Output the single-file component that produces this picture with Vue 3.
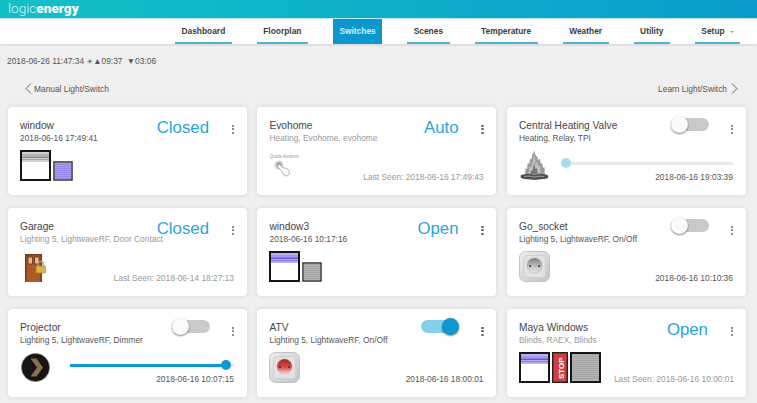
<script setup>
const nav = [
  { label: 'Dashboard' }, { label: 'Floorplan' }, { label: 'Switches', active: true },
  { label: 'Scenes' }, { label: 'Temperature' }, { label: 'Weather' }, { label: 'Utility' },
  { label: 'Setup', caret: true },
]
const b = (w, color, closed) => ({ t: 'blind', w, color, closed })
const cards = [
  { name: 'window', sub: '2018-06-16 17:49:41', on: true, state: 'Closed', icons: [b(31, 'gray', false), b(20, 'purple', true)] },
  { name: 'Evohome', sub: 'Heating, Evohome, evohome', state: 'Auto', icons: [{ t: 'hand' }], foot: 'Last Seen: 2018-06-16 17:49:43', dim: true },
  { name: 'Central Heating Valve', sub: 'Heating, Relay, TPI', on: true, toggle: 'off', icons: [{ t: 'fire' }], slider: 0, foot: '2018-06-16 19:03:39' },
  { name: 'Garage', sub: 'Lighting 5, LightwaveRF, Door Contact', state: 'Closed', icons: [{ t: 'door' }], foot: 'Last Seen: 2018-06-14 18:27:13', dim: true },
  { name: 'window3', sub: '2018-06-16 10:17:16', on: true, state: 'Open', icons: [b(31, 'purple', false), b(20, 'gray', true)] },
  { name: 'Go_socket', sub: 'Lighting 5, LightwaveRF, On/Off', on: true, toggle: 'off', icons: [{ t: 'socket' }], foot: '2018-06-16 10:10:36' },
  { name: 'Projector', sub: 'Lighting 5, LightwaveRF, Dimmer', on: true, toggle: 'off', icons: [{ t: 'plex' }], slider: 95, foot: '2018-06-16 10:07:15' },
  { name: 'ATV', sub: 'Lighting 5, LightwaveRF, On/Off', on: true, toggle: 'on', icons: [{ t: 'socket', red: true }], foot: '2018-06-16 18:00:01' },
  { name: 'Maya Windows', sub: 'Blinds, RAEX, Blinds', state: 'Open', icons: [b(31, 'purple', false), { t: 'stop' }, b(31, 'gray', true)], foot: 'Last Seen: 2018-06-16 10:00:01', dim: true },
]
const slats = [2, 4, 6, 8, 10, 12, 14, 16, 18, 20, 22, 24, 26, 28]
</script>

<template>
  <div class="page">
    <header class="brand"><span class="logo"><span class="thin">logic</span><b>energy</b></span></header>
    <nav class="nav">
      <a v-for="n in nav" :key="n.label" class="tab" :class="{ active: n.active }">
        {{ n.label }}<i v-if="n.caret" class="caret"></i>
      </a>
    </nav>
    <div class="clock">2018-06-26 11:47:34 <span class="sun">☀</span>▲09:37 <span class="down">▼03:06</span></div>
    <div class="crumbs">
      <a class="crumb">
        <svg width="7" height="11" viewBox="0 0 7 11"><path d="M6 .5 1 5.500l5 5" fill="none" stroke="#555" stroke-width=".9" /></svg>
        Manual Light/Switch
      </a>
      <a class="crumb next">
        Learn Light/Switch
        <svg width="7" height="11" viewBox="0 0 7 11"><path d="M1 .5l5 5-5 5" fill="none" stroke="#555" stroke-width=".9" /></svg>
      </a>
    </div>
    <main class="grid">
      <section v-for="c in cards" :key="c.name" class="card">
        <div class="head">
          <div class="info">
            <div class="name">{{ c.name }}</div>
            <div class="sub" :class="{ dim: !c.on }">{{ c.sub }}</div>
          </div>
          <div v-if="c.state" class="state">{{ c.state }}</div>
          <div v-if="c.toggle" class="toggle" :class="{ on: c.toggle === 'on' }"><i></i></div>
          <div class="menu"><i></i><i></i><i></i></div>
        </div>
        <div class="body">
          <div class="icons">
            <template v-for="(ic, i) in c.icons" :key="i">
              <svg v-if="ic.t === 'blind'" :width="ic.w" :height="ic.w" :viewBox="`0 0 ${ic.w} ${ic.w}`" class="blind">
                <rect x="1" y="1" :width="ic.w - 2" :height="ic.w - 2" fill="#fff" :stroke="ic.w > 25 ? '#151515' : '#333'" :stroke-width="ic.w > 25 ? 2 : 1.500" />
                <template v-if="ic.closed">
                  <rect x="2" y="2" :width="ic.w - 4" :height="ic.w - 4" :fill="ic.color === 'gray' ? '#bcbcbc' : '#8f7ce8'" />
                  <rect v-for="s in slats.filter(v => v < ic.w - 3)" :key="s" x="2" :y="s + .5" :width="ic.w - 4" height=".7" :fill="ic.color === 'gray' ? '#909090' : '#c4b8f5'" />
                </template>
                <template v-else>
                  <rect x="2" y="2" :width="ic.w - 4" height="10" :fill="ic.color === 'gray' ? '#cfcfcf' : '#b9adf0'" />
                  <rect x="2" y="4.500" :width="ic.w - 4" height="1" :fill="ic.color === 'gray' ? '#9a9a9a' : '#9583e6'" />
                  <rect x="2" y="6.500" :width="ic.w - 4" height="1.500" :fill="ic.color === 'gray' ? '#8a8a8a' : '#6c54d8'" />
                  <rect x="2" y="9" :width="ic.w - 4" height="1" :fill="ic.color === 'gray' ? '#a8a8a8' : '#8a76e2'" />
                </template>
              </svg>
              <svg v-else-if="ic.t === 'stop'" width="16" height="31" viewBox="0 0 16 31" class="stop">
                <rect x=".7" y=".7" width="14.600" height="29.600" fill="#d23d3d" stroke="#222" stroke-width="1.400" />
                <text transform="translate(11.500 27) rotate(-90)" class="stoptext">STOP</text>
              </svg>
              <div v-else-if="ic.t === 'hand'" class="quick">
                <span>Quick Actions</span>
                <svg width="20" height="20" viewBox="0 0 20 20" class="soft">
                  <circle cx="5" cy="5" r="4.600" fill="#d2d2d2" />
                  <circle cx="5" cy="5" r="2.400" fill="#9a9a9a" />
                  <path d="M3.800 5.400c.5-1 1.600-1.200 2.300-.4l3 3c1.700-.4 4 .4 5.400 2.200 1.400 1.800 1.200 3.900-.2 5-1.300 1.100-3.200.9-4.500-.5L7.800 11.400 3.900 6.900c-.2-.4-.3-1-.1-1.500Z" fill="#fff" stroke="#9b9b9b" stroke-width=".8" />
                </svg>
              </div>
              <svg v-else-if="ic.t === 'fire'" width="31" height="31" viewBox="0 0 31 31" class="soft">
                <path d="M15 0l1.500 5 2 2.500.5 3 2-2 .5 4.500 2 1 .5 4 1.500-1 .3 8H6l.6-7 1.500 1 .4-5 2-1 .5-4.500 1.500 1 .6-4.500 1.500-2.500Z" fill="#9a9a9a" />
                <path d="M15 3l1 6 .5 6 1.500-4 1 6 2-2 .5 8H9.500l1-7 1.500 2 1-6 1 1Z" fill="#c2c2c2" />
                <path d="M15 13l1.500 6 1.500-1 .5 6h-7l.6-4 1.400 1Z" fill="#757575" />
                <path d="M2.500 25c4-1.500 8-1 13 0 5-1 9-1.500 13 0 1.300 1.200 1 3-.5 3.600-3.500 1-7 .5-12.500 1.300-5.500-.8-9.500-.3-12.500-1.300-1.700-.8-1.700-2.500-1-3.600Z" fill="#505050" />
                <path d="M5 26.500c3.500-.7 7-.3 10 .6 3.500-.9 7-1.100 10-.4" fill="none" stroke="#a8a8a8" stroke-width=".9" />
              </svg>
              <svg v-else-if="ic.t === 'door'" width="31" height="31" viewBox="0 0 31 31" class="soft">
                <path d="M5 3h17v28H5Z" fill="#7a3b14" />
                <path d="M6.500 4.500h14V31h-14Z" fill="#ad5a26" />
                <rect x="8" y="6" width="4.500" height="7" fill="#e6b98c" stroke="#5c2c10" stroke-width=".8" />
                <rect x="14.500" y="6" width="4.500" height="7" fill="#e6b98c" stroke="#5c2c10" stroke-width=".8" />
                <path d="M18 15v-2a2.700 2.700 0 0 1 5.400 0v2" fill="none" stroke="#a8a898" stroke-width="1.300" />
                <rect x="16" y="15" width="9.500" height="7" rx="1" fill="#dcb04c" stroke="#a57e28" stroke-width=".6" />
              </svg>
              <svg v-else-if="ic.t === 'socket'" width="31" height="31" viewBox="0 0 31 31" class="soft">
                <defs>
                  <linearGradient :id="`plate${ic.red ? 'r' : 'g'}`" x1="0" y1="0" x2="1" y2="1"><stop offset="0" stop-color="#eee" /><stop offset="1" stop-color="#c4c4c4" /></linearGradient>
                  <linearGradient id="redface" x1="0" y1="0" x2="0" y2="1"><stop offset="0" stop-color="#a92424" /><stop offset=".55" stop-color="#d64a4a" /><stop offset="1" stop-color="#f6dede" /></linearGradient>
                  <linearGradient id="grayface" x1="0" y1="0" x2="0" y2="1"><stop offset="0" stop-color="#7d7d7d" /><stop offset=".6" stop-color="#c4c4c4" /><stop offset="1" stop-color="#e6e6e6" /></linearGradient>
                </defs>
                <rect x=".5" y=".5" width="30" height="30" rx="6" :fill="`url(#plate${ic.red ? 'r' : 'g'})`" stroke="#c2c2c2" />
                <rect x="4.500" y="4.500" width="22" height="22" rx="3" fill="#e2e2e2" stroke="#cfcfcf" />
                <circle cx="15.500" cy="14.500" r="7.500" :fill="ic.red ? 'url(#redface)' : 'url(#grayface)'" stroke="#999" stroke-width=".4" />
                <circle cx="11" cy="15" r="1" fill="#333" />
                <circle cx="20" cy="15" r="1" fill="#333" />
              </svg>
              <svg v-else-if="ic.t === 'plex'" width="31" height="31" viewBox="0 0 31 31" class="soft">
                <circle cx="15.500" cy="15.500" r="14" fill="#161513" stroke="#8a7b60" stroke-width=".6" />
                <path d="M10.500 6.500h6l6.500 9-6.500 9h-6l6.500-9Z" fill="#85734f" />
              </svg>
            </template>
          </div>
          <div class="side" :class="{ dim: c.dim }">
            <div v-if="c.slider !== undefined" class="slider" :class="{ low: c.slider === 0 }">
              <div class="fill" :style="{ width: c.slider + '%' }"></div>
              <i :style="{ left: c.slider + '%' }"></i>
            </div>
            <div v-if="c.foot" class="foot">{{ c.foot }}</div>
          </div>
        </div>
      </section>
    </main>
  </div>
</template>

<style>
html, body { margin: 0; background: #efefef; }
</style>

<style scoped>
.page {
  width: 757px; height: 403px; overflow: hidden; background: #efefef;
  font-family: "Liberation Sans", Arial, sans-serif; font-size: 8.4px; color: #555;
}
.brand {
  height: 18px; box-sizing: border-box; padding-left: 8px; line-height: 17px;
  background: linear-gradient(90deg, #13c0c6 0%, #0eb0c9 50%, #0a9ccb 100%);
}
.logo { font-family: Roboto, sans-serif; font-size: 13.6px; color: #d8f6f7; }
.thin { font-weight: 300; }
.logo b { font-weight: 900; color: #f4fdfd; }
.nav {
  display: flex; gap: 25px; height: 25.5px; box-sizing: border-box; padding-left: 175px;
  background: #fff; border-top: 1px solid #bfeaf0; box-shadow: 0 1px 2px rgba(0,0,0,.12);
}
.tab {
  padding: 0 6.5px; line-height: 24px; height: 24.5px; box-sizing: border-box;
  font-weight: 700; color: #3b3b3b; border-bottom: 2px solid #4fb2d9; white-space: nowrap;
}
.tab.active { background: #0b98cf; color: #d3eef8; border-bottom-color: #0b98cf; }
.caret {
  display: inline-block; margin-left: 5px; vertical-align: 1px;
  border: 2px solid transparent; border-top-color: #999; border-bottom: 0;
}
.clock { padding: 11px 0 0 7px; line-height: 12px; white-space: nowrap; }
.sun { font-size: 7.5px; font-family: "DejaVu Sans", sans-serif; }
.down { margin-left: 2px; }
.crumbs { display: flex; justify-content: space-between; padding: 15px 19px 0 25px; }
.crumb { display: flex; align-items: center; gap: 2px; line-height: 12px; height: 12px; }
.crumb.next { gap: 4px; }
.grid {
  display: grid; grid-template-columns: repeat(3, 239.3px); grid-auto-rows: 88.5px;
  gap: 12.5px 10.2px; padding: 12px 0 0 7.7px;
}
.card {
  box-sizing: border-box; padding: 12px 13px 0 12.3px; background: #fff; border-radius: 4px;
  box-shadow: 0 0 5px rgba(0,0,0,.1);
}
.head { display: flex; align-items: flex-start; height: 26px; }
.info { flex: 1; min-width: 0; white-space: nowrap; }
.name { font-size: 10.2px; line-height: 13px; color: #454545; }
.sub { line-height: 13px; color: #555; }
.sub.dim { color: #999; }
.state { font-size: 16.8px; line-height: 20px; color: #2aa5dc; margin: -1px 23px 0 0; }
.toggle {
  position: relative; width: 38px; height: 13px; margin: -1px 22px 0 0; border-radius: 7px; background: #c9c9c9;
}
.toggle i {
  position: absolute; left: 0; top: -2px; width: 17px; height: 17px; border-radius: 50%; background: #fbfbfb;
  box-shadow: 0 1px 2px rgba(0,0,0,.5);
}
.toggle.on { background: #85cfe9; }
.toggle.on i { left: 21px; background: #0d98d0; }
.menu { display: flex; flex-direction: column; gap: 1.6px; width: 2px; margin: 6px 0 0 0; }
.menu i { width: 2.2px; height: 2.2px; border-radius: 50%; background: #666; }
.body { display: flex; height: 33px; margin-top: 5px; }
.icons { display: flex; align-items: flex-end; gap: 2px; height: 31px; flex: none; }
.soft { filter: blur(.35px); }
.side { flex: 1; min-width: 0; display: flex; flex-direction: column; justify-content: flex-end; align-items: stretch; padding-left: 13px; }
.foot { line-height: 11px; text-align: right; white-space: nowrap; }
.side.dim .foot { color: #999; }
.slider { position: relative; height: 3px; margin: 0 0 7px 6px; background: #e8e8e8; }
.fill { height: 100%; background: #0d98d0; }
.slider i {
  position: absolute; top: -3.5px; width: 10px; height: 10px; margin-left: -5px; border-radius: 50%; background: #0d98d0;
}
.slider.low i { background: #a6dbf0; margin-left: -8px; }
.quick { position: relative; width: 31px; height: 31px; }
.quick span { position: absolute; left: 0; top: 4px; font-size: 4.8px; line-height: 6px; color: #999; white-space: nowrap; }
.quick svg { position: absolute; left: 5px; top: 10.5px; }
.stoptext { font-size: 8px; font-weight: 700; fill: #fff; font-family: "Liberation Sans", sans-serif; }
</style>
